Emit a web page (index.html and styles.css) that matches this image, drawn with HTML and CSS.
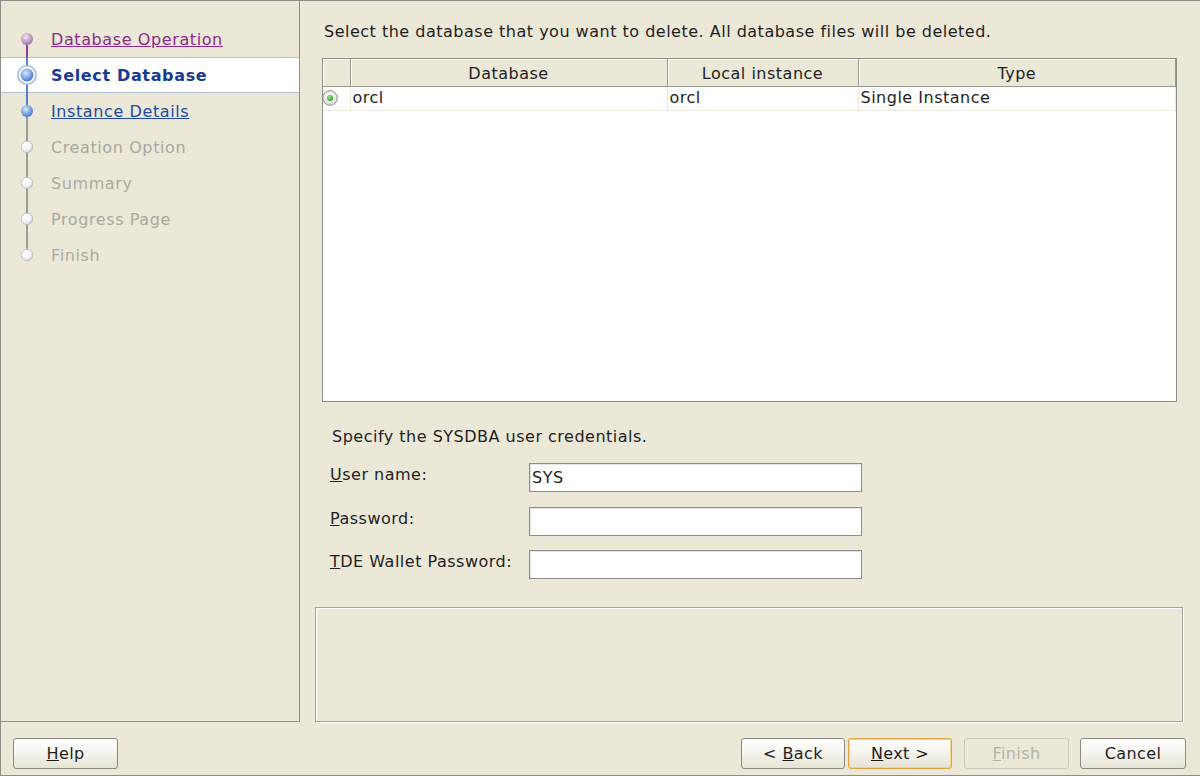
FILE: index.html
```html
<!DOCTYPE html>
<html>
<head>
<meta charset="utf-8">
<link rel="stylesheet" href="styles.css">
</head>
<body>
<div class="window">
  <div class="main">
    <nav class="steps">
      <div class="step visited">
        <svg class="ico" width="24" height="36" viewBox="0 0 24 36">
          <defs>
            <radialGradient id="gp" cx="0.4" cy="0.35" r="0.7"><stop offset="0" stop-color="#f3e8f3"/><stop offset="1" stop-color="#a06aa6"/></radialGradient>
          </defs>
          <line x1="12" y1="18" x2="12" y2="36" stroke="#8e3f8e" stroke-width="2"/>
          <circle cx="12" cy="18" r="6" fill="url(#gp)"/>
        </svg>
        <a class="lbl">Database Operation</a>
      </div>
      <div class="step current">
        <svg class="ico" width="24" height="36" viewBox="0 0 24 36">
          <defs>
            <radialGradient id="gb" cx="0.4" cy="0.35" r="0.7"><stop offset="0" stop-color="#dbe8fb"/><stop offset="1" stop-color="#3a70d4"/></radialGradient>
          </defs>
          <line x1="12" y1="0" x2="12" y2="36" stroke="#5b80c8" stroke-width="2"/>
          <circle cx="12" cy="18" r="9.2" fill="#f4f8fd" stroke="#9fbde0" stroke-width="1.6"/>
          <circle cx="12" cy="18" r="6.4" fill="url(#gb)"/>
        </svg>
        <span class="lbl">Select Database</span>
      </div>
      <div class="step next">
        <svg class="ico" width="24" height="36" viewBox="0 0 24 36">
          <line x1="12" y1="0" x2="12" y2="18" stroke="#5b80c8" stroke-width="2"/>
          <line x1="12" y1="18" x2="12" y2="36" stroke="#9d9d97" stroke-width="2"/>
          <circle cx="12" cy="18" r="6" fill="url(#gb)"/>
        </svg>
        <a class="lbl">Instance Details</a>
      </div>
      <div class="step disabled">
        <svg class="ico" width="24" height="36" viewBox="0 0 24 36">
          <defs>
            <radialGradient id="gw1" cx="0.4" cy="0.35" r="0.7"><stop offset="0" stop-color="#ffffff"/><stop offset="0.6" stop-color="#f2f2f6"/><stop offset="1" stop-color="#c4c5ce"/></radialGradient>
          </defs>
          <line x1="12" y1="0" x2="12" y2="36" stroke="#9d9d97" stroke-width="2"/>
          <circle cx="12" cy="18" r="5.8" fill="url(#gw1)" stroke="#b9bac2" stroke-width="0.8"/>
        </svg>
        <span class="lbl">Creation Option</span>
      </div>
      <div class="step disabled">
        <svg class="ico" width="24" height="36" viewBox="0 0 24 36">
          <line x1="12" y1="0" x2="12" y2="36" stroke="#9d9d97" stroke-width="2"/>
          <circle cx="12" cy="18" r="5.8" fill="url(#gw1)" stroke="#b9bac2" stroke-width="0.8"/>
        </svg>
        <span class="lbl">Summary</span>
      </div>
      <div class="step disabled">
        <svg class="ico" width="24" height="36" viewBox="0 0 24 36">
          <line x1="12" y1="0" x2="12" y2="36" stroke="#9d9d97" stroke-width="2"/>
          <circle cx="12" cy="18" r="5.8" fill="url(#gw1)" stroke="#b9bac2" stroke-width="0.8"/>
        </svg>
        <span class="lbl">Progress Page</span>
      </div>
      <div class="step disabled">
        <svg class="ico" width="24" height="36" viewBox="0 0 24 36">
          <line x1="12" y1="0" x2="12" y2="18" stroke="#9d9d97" stroke-width="2"/>
          <circle cx="12" cy="18" r="5.8" fill="url(#gw1)" stroke="#b9bac2" stroke-width="0.8"/>
        </svg>
        <span class="lbl">Finish</span>
      </div>
    </nav>

    <section class="content">
      <p class="intro">Select the database that you want to delete. All database files will be deleted.</p>
      <div class="table-wrap">
        <table class="grid">
          <colgroup>
            <col class="c-radio"><col class="c-db"><col class="c-local"><col class="c-type">
          </colgroup>
          <thead>
            <tr><th></th><th>Database</th><th>Local instance</th><th>Type</th></tr>
          </thead>
          <tbody>
            <tr>
              <td class="radio-cell">
                <svg width="20" height="20" viewBox="0 0 20 20">
                  <defs>
                    <radialGradient id="rg" cx="0.5" cy="0.4" r="0.6"><stop offset="0" stop-color="#ffffff"/><stop offset="1" stop-color="#dedcd2"/></radialGradient>
                    <radialGradient id="gg" cx="0.4" cy="0.35" r="0.7"><stop offset="0" stop-color="#9ae695"/><stop offset="1" stop-color="#1f9a26"/></radialGradient>
                  </defs>
                  <circle cx="8" cy="10" r="7.3" fill="url(#rg)" stroke="#8e8e88" stroke-width="1"/>
                  <circle cx="8" cy="10" r="3" fill="url(#gg)"/>
                </svg>
              </td>
              <td>orcl</td>
              <td>orcl</td>
              <td>Single Instance</td>
            </tr>
          </tbody>
        </table>
      </div>

      <p class="spec">Specify the SYSDBA user credentials.</p>
      <div class="form">
        <label class="flabel"><u>U</u>ser name:</label>
        <div class="input">SYS</div>
        <label class="flabel"><u>P</u>assword:</label>
        <div class="input"></div>
        <label class="flabel"><u>T</u>DE Wallet Password:</label>
        <div class="input"></div>
      </div>

      <div class="msg-panel"></div>
    </section>
  </div>

  <footer class="buttons">
    <button class="btn btn-help"><u>H</u>elp</button>
    <div class="spacer"></div>
    <button class="btn btn-back">&lt; <u>B</u>ack</button>
    <button class="btn btn-next"><u>N</u>ext &gt;</button>
    <button class="btn btn-finish" disabled><u>F</u>inish</button>
    <button class="btn btn-cancel">Cancel</button>
  </footer>
</div>
</body>
</html>
```

FILE: styles.css
```css
* { box-sizing: border-box; }
html, body { margin: 0; padding: 0; }
body {
  background: #ebe8d8;
  font-family: "DejaVu Sans", "Liberation Sans", sans-serif;
  font-size: 16px;
  letter-spacing: 0.5px;
  color: #1e1e1e;
}
.window {
  width: 1200px;
  height: 776px;
  border-top: 1px solid #8d8d88;
  border-left: 1px solid #8d8d88;
  border-bottom: 1px solid #8d8d88;
  display: flex;
  flex-direction: column;
  overflow: hidden;
}
.main {
  height: 721px;
  display: flex;
}
.steps {
  width: 299px;
  flex: none;
  border-right: 1px solid #8f8f89;
  border-bottom: 1px solid #8f8f89;
  padding-top: 20px;
}
.step {
  height: 36px;
  display: flex;
  align-items: center;
  padding-left: 14px;
}
.ico { flex: none; margin-right: 12px; }
.lbl { line-height: 20px; letter-spacing: 0.6px; padding-top: 2px; }
.visited .lbl { color: #8b2a8b; text-decoration: underline; }
.current {
  background: #ffffff;
  border-top: 1px solid #b4c1d3;
  border-bottom: 1px solid #b4c1d3;
}
.current .lbl { color: #173a93; font-weight: bold; letter-spacing: 0.65px; }
.next .lbl { color: #2348a3; text-decoration: underline; }
.disabled .lbl { color: #aaa9a0; }

.content {
  flex: 1;
  display: flex;
  flex-direction: column;
  padding-left: 22px;
  padding-right: 23px;
}
.intro {
  margin: 21px 0 0 2px;
  line-height: 20px;
}
.table-wrap {
  margin-top: 16px;
  height: 344px;
  border: 1px solid #8e8e89;
  background: #ffffff;
}
.grid {
  border-collapse: collapse;
  table-layout: fixed;
  width: 100%;
}
.c-radio { width: 27px; }
.c-db { width: 317px; }
.c-local { width: 191px; }
.grid th {
  height: 27px;
  font-weight: normal;
  background: #ebe8d8;
  border-right: 1px solid #9a9a93;
  border-bottom: 1px solid #9a9a93;
  box-shadow: inset 0 1px 0 #ffffff, inset 1px 0 0 #ffffff;
  padding: 2px 0 0 0;
  text-align: center;
}
.grid td {
  height: 24px;
  padding: 0 0 1px 2px;
  border-right: 1px solid #ece9dc;
  border-bottom: 1px solid #ece9dc;
  white-space: nowrap;
}
.grid td.radio-cell {
  padding: 0;
  text-align: left;
  line-height: 0;
}
.radio-cell svg { vertical-align: middle; margin-left: -1px; }

.spec {
  margin: 25px 0 0 10px;
  line-height: 20px;
}
.form {
  margin: 16px 0 0 8px;
  display: grid;
  grid-template-columns: 199px 333px;
  row-gap: 14.5px;
}
.flabel {
  line-height: 20px;
  padding-top: 2px;
}
.input {
  height: 29px;
  background: #ffffff;
  border: 1px solid #8c8c88;
  box-shadow: inset 1px 1px 0 #e4e4e0;
  padding: 0 0 0 2px;
  line-height: 27px;
}
.msg-panel {
  margin: 28px -6px 0 -7px;
  height: 115px;
  border: 1px solid #a3a39b;
  box-shadow: inset 1px 1px 0 #ffffff, 1px 1px 0 #ffffff;
}

.buttons {
  flex: 1;
  display: flex;
  align-items: flex-start;
  padding: 16px 14px 0 12px;
}
.spacer { flex: 1; }
.btn {
  font-family: "DejaVu Sans", "Liberation Sans", sans-serif;
  font-size: 16px;
  color: #1e1e1e;
  height: 31px;
  width: 105px;
  border: 1px solid #8a8a84;
  border-radius: 3px;
  background: linear-gradient(#ffffff 0%, #f6f5ee 45%, #e6e3d4 100%);
  padding: 0;
  letter-spacing: 0.4px;
}
.btn u { text-decoration: underline; }
.btn-back { width: 104px; }
.btn-next {
  width: 104px;
  margin-left: 3px;
  border-color: #e0a448;
  box-shadow: inset 0 0 0 1px #f5d38f;
}
.btn-finish {
  margin-left: 12px;
  color: #b3b1a6;
  border-color: #c9c7bb;
  background: #ebe8d8;
}
.btn-cancel { width: 106px; margin-left: 11px; }
```
